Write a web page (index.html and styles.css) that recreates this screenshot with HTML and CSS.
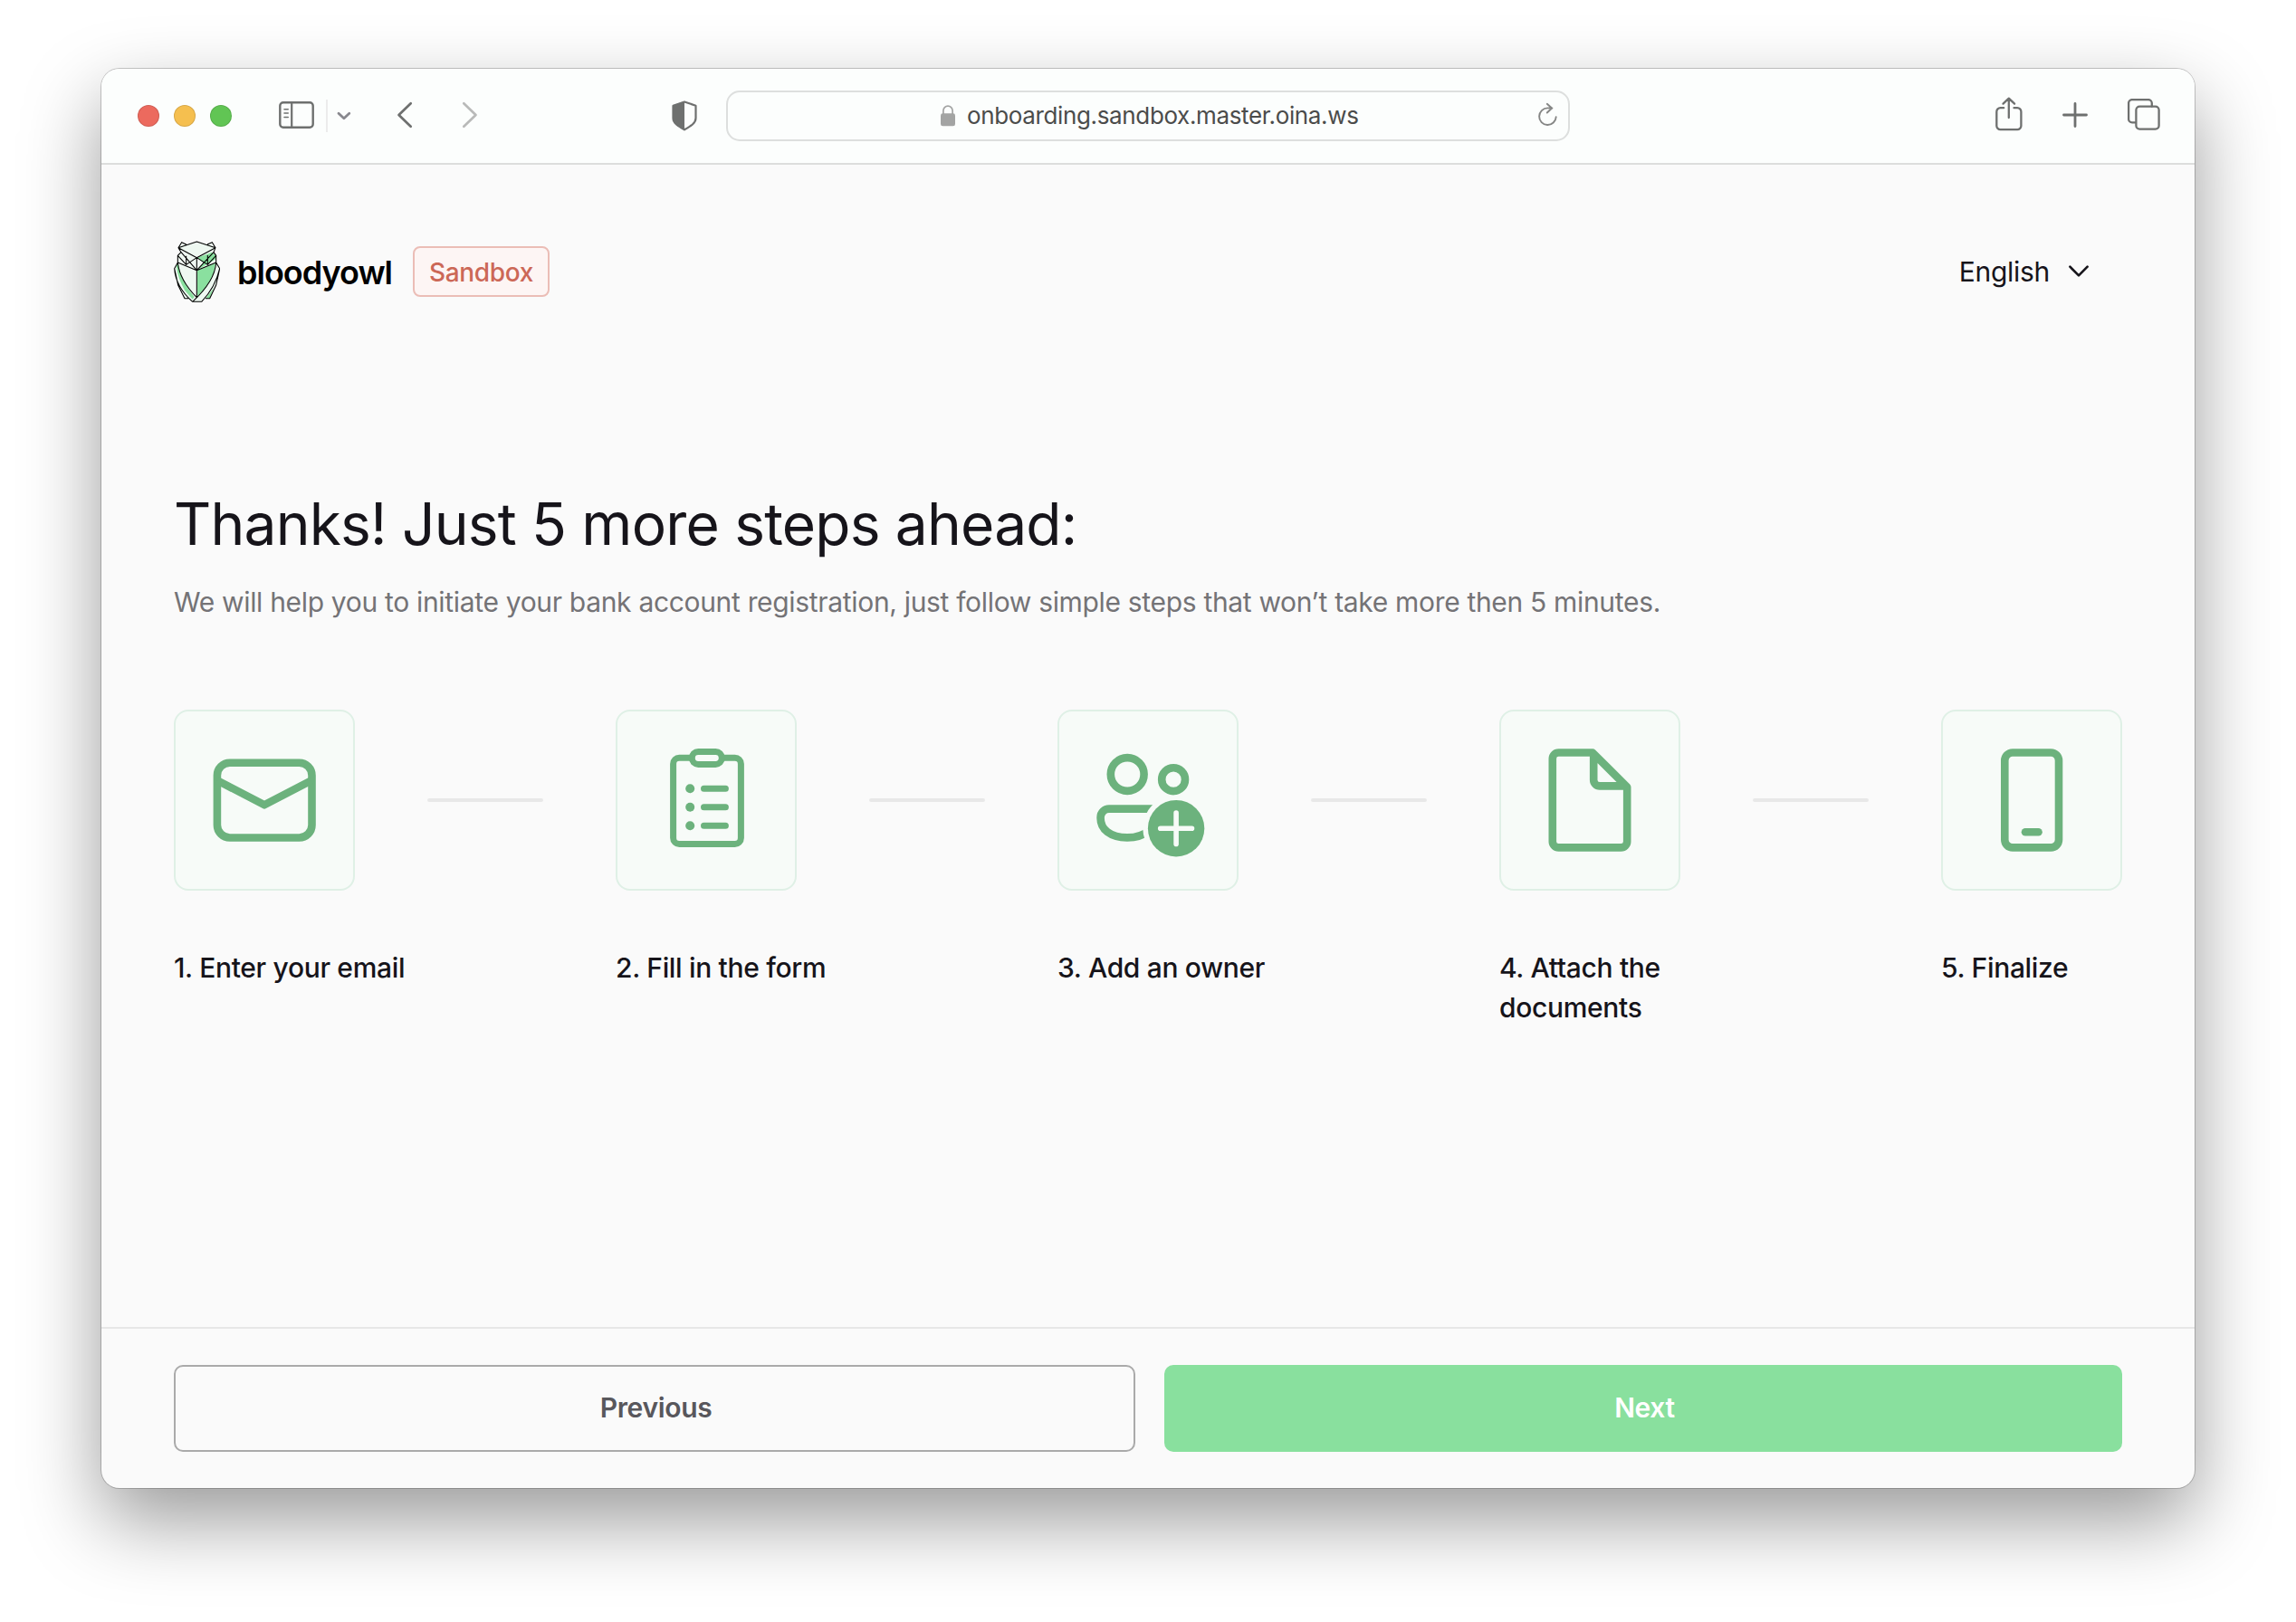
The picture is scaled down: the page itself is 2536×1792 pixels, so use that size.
FILE: index.html
```html
<!DOCTYPE html>
<html lang="en">
<head>
<meta charset="utf-8">
<title>Onboarding</title>
<link rel="stylesheet" href="styles.css">
</head>
<body>
<div class="window">
  <header class="toolbar">
    <div class="lights"><span class="light red"></span><span class="light yellow"></span><span class="light green"></span></div>
    <svg class="icon sidebar" width="40" height="32" viewBox="0 0 40 32"><rect x="1.3" y="2.3" width="36.4" height="27.4" rx="3.5" stroke-width="2.4"/><path d="M14.2 2v28" stroke-width="2.2"/><path d="M6 9.7h4.2M6 14h4.2M6 18.500h4.2" stroke-width="1.6"/></svg>
    <span class="divider"></span>
    <svg class="icon caret" width="16" height="10" viewBox="0 0 16 10"><path d="M2 2.200l5.900 5.600 5.900-5.600" stroke-width="2.800"/></svg>
    <svg class="icon back" width="18" height="30" viewBox="0 0 18 30"><path d="M15.700 2.300L2.500 15l13.200 12.700" stroke-width="2.700"/></svg>
    <svg class="icon forward" width="18" height="30" viewBox="0 0 18 30"><path d="M2.300 2.300L15.500 15 2.300 27.700" stroke-width="2.700"/></svg>
    <svg class="icon shield" width="28" height="34" viewBox="0 0 28 34"><path d="M14 1.500L26.500 5.700v13.800c0 5.500-5.500 8.800-12.500 12.800C7 28.300 1.500 25 1.500 19.500V5.700z" stroke-width="2.200"/><path class="solid" d="M14 1L1 5.500v14.200C1 25.500 7 28.800 14 32.800z"/></svg>
    <div class="address">
      <svg class="lock" width="16" height="24" viewBox="0 0 16 24"><path d="M2.900 11V6.200a5.100 5.100 0 0 1 10.200 0V11" fill="none" stroke="#a3a4a3" stroke-width="1.700"/><rect x="0" y="9.300" width="16" height="14" rx="2.300" fill="#a3a4a3"/></svg>
      <span class="url">onboarding.sandbox.master.oina.ws</span>
      <svg class="icon reload" width="24" height="28" viewBox="0 0 24 28"><path d="M20.700 16.200a9.300 9.300 0 1 1-9.300-9.800l5 .1M10.800 1.800l5.300 4.700-5.300 5" stroke-width="1.900"/></svg>
    </div>
    <svg class="icon share" width="30" height="38" viewBox="0 0 30 38"><path d="M9.200 12.200H5.500a4.200 4.200 0 0 0-4.200 4.200v15.500a4.200 4.200 0 0 0 4.200 4.200h18.700a4.200 4.200 0 0 0 4.200-4.200V16.400a4.200 4.200 0 0 0-4.200-4.200H20.500M14.800 23V2M8.500 7.600l6.300-6 6.300 6" stroke-width="2.300"/></svg>
    <svg class="icon plus" width="28" height="28" viewBox="0 0 28 28"><path d="M14 1.500v25M1.500 14h25" stroke-width="2.800"/></svg>
    <svg class="icon tabs" width="36" height="36" viewBox="0 0 36 36"><path d="M8.500 26.400H5a3.900 3.900 0 0 1-3.900-3.900V5A3.900 3.900 0 0 1 5 1.100h17.900A3.900 3.900 0 0 1 26.800 5v3.500" stroke-width="2.300"/><rect x="9.400" y="8.700" width="25.200" height="25" rx="3.900" stroke-width="2.300"/></svg>
  </header>

  <main class="page">
    <div class="topbar">
      <svg class="owl" width="51" height="68" viewBox="36 48 153 204">
        <path class="pale" d="M51 71L62 53 78 61 112 51 147 60 163 53 174 71 168 86 176 97v23l12 22-12 53-21 44h-14l-13 12H98l-14-12H72L50 195 38 140l11-20V97l10-11z"/>
        <path class="mint" d="M44 130l6-8q8 55 54 112l-6 8-26-30Q50 175 44 130zM114 146l60-24q-6 60-60 110zM114 104l48-18 13 11v12l-61 36 20-24zM168 205l-14 34h-13z"/>
        <path class="line" d="M51 71L112 51l62 20-62 33zM51 71l11-18 16 8M174 71l-11-18-16 7M51 71l9 15-11 11v23l63 26 64-26V97l-8-11 6-15M60 86l52 60 56-60M112 104L77 127 49 97M112 104l36 23 28-30M77 98v29M148 96v31M112 104v132M49 120q6 58 63 116M176 120q-4 62-78 130M49 120L38 140q4 60 60 110h30q46-48 60-110l-12-20M38 140l12 55 22 44h12M188 140l-12 55-21 44h-14"/>
      </svg>
      <span class="brand">bloodyowl</span>
      <span class="badge">Sandbox</span>
      <div class="language">English
        <svg width="24" height="16" viewBox="0 0 24 16"><path d="M2.400 2.700L12 12.300l9.600-9.600" fill="none" stroke="#16141a" stroke-width="2.600" stroke-linecap="round" stroke-linejoin="round"/></svg>
      </div>
    </div>

    <h1 class="title">Thanks! Just 5 more steps ahead:</h1>
    <p class="lead">We will help you to initiate your bank account registration, just follow simple steps that won’t take more then 5 minutes.</p>

    <ol class="steps">
      <li class="step">
        <div class="tile"><svg viewBox="2 2 196 196"><rect x="47.900" y="58.700" width="104.600" height="82.800" rx="14"/><path d="M48 78.200l52 27.100 52-27.100"/></svg></div>
        <span class="rule"></span>
        <p class="label">1. Enter your email</p>
      </li>
      <li class="step">
        <div class="tile"><svg viewBox="2 2 196 196"><g class="thin"><path d="M84.300 53.200H70.300a6.700 6.700 0 0 0-6.700 6.700v81.900a6.700 6.700 0 0 0 6.700 6.700h61.400a6.700 6.700 0 0 0 6.700-6.700V59.900a6.700 6.700 0 0 0-6.700-6.700h-14"/><rect x="84.300" y="46.500" width="33" height="13.900" rx="6.900"/><path class="round" d="M97.500 87.300h23.900M97.500 107.700h23.900M97.500 128.300h23.900"/></g><g class="solid"><circle cx="82.200" cy="87.300" r="5"/><circle cx="82.200" cy="107.700" r="5"/><circle cx="82.200" cy="128.300" r="5"/></g></svg></div>
        <span class="rule"></span>
        <p class="label">2. Fill in the form</p>
      </li>
      <li class="step">
        <div class="tile"><svg viewBox="2 2 196 196"><circle cx="77.200" cy="71.500" r="18.400"/><circle cx="128.100" cy="77.200" r="12.900"/><path d="M110 109.600H57a9.400 9.400 0 0 0-9.400 9.400v1c0 12 10.400 21.400 29.400 21.400 11 0 18-2.400 25-8.400"/><circle class="halo" cx="131.100" cy="131.200" r="36.800"/><circle class="solid" cx="131.100" cy="131.200" r="31.200"/><path class="cross" d="M131.100 114v34.400M113.700 131.200h34.800"/></svg></div>
        <span class="rule"></span>
        <p class="label">3. Add an owner</p>
      </li>
      <li class="step">
        <div class="tile"><svg viewBox="2 2 196 196"><path d="M103 47.500H65.500a6.700 6.700 0 0 0-6.700 6.700v91.500a6.700 6.700 0 0 0 6.700 6.700h69a6.700 6.700 0 0 0 6.700-6.700V85.500zM104.200 48v29.700a6.700 6.700 0 0 0 6.700 6.700H140"/></svg></div>
        <span class="rule"></span>
        <p class="label">4. Attach the documents</p>
      </li>
      <li class="step">
        <div class="tile"><svg viewBox="2 2 196 196"><rect x="70.300" y="47.500" width="59.700" height="104.900" rx="8.700"/><path class="round" d="M93 135.300h14.500"/></svg></div>
        <p class="label">5. Finalize</p>
      </li>
    </ol>
  </main>

  <footer class="actions">
    <button class="button previous">Previous</button>
    <button class="button next">Next</button>
  </footer>
</div>
</body>
</html>
```
FILE: styles.css
```css
* { box-sizing: border-box; }

body {
  margin: 0;
  height: 1792px;
  overflow: hidden;
  background: #fff;
  color: #16141a;
  font-family: Inter, "Liberation Sans", sans-serif;
}

.window {
  display: flex;
  flex-direction: column;
  width: 2312px;
  height: 1568px;
  margin: 76px 112px;
  border-radius: 20px;
  background: #fafafa;
  box-shadow: 0 0 0 1px rgba(0, 0, 0, .2), 0 36px 86px rgba(0, 0, 0, .4);
}

/* Browser toolbar */
.toolbar {
  display: flex;
  align-items: center;
  height: 106px;
  padding: 0 38px 0 40px;
  border-bottom: 2px solid #dcdddc;
  border-radius: 20px 20px 0 0;
  background: #fcfefd;
}

.lights { display: flex; gap: 16px; }
.light { width: 24px; height: 24px; border-radius: 50%; border: 1px solid rgba(0, 0, 0, .12); }
.red { background: #ec6a5e; }
.yellow { background: #f5bf4f; }
.green { background: #61c554; }

.icon { flex: none; fill: none; stroke: #6e706f; stroke-linecap: round; stroke-linejoin: round; }
.icon .solid { fill: #6e706f; stroke: none; }
.sidebar { margin: -2px 0 0 52px; }
.divider { width: 2px; height: 36px; margin-left: 12px; background: #ececec; }
.caret { margin-left: 10px; stroke: #88888e; }
.back { margin: -2px 0 0 50px; }
.forward { margin: -2px 0 0 54px; stroke: #b9bab9; }
.shield { margin: -1px 0 0 214px; }

.address {
  display: flex;
  align-items: center;
  flex: none;
  width: 932px;
  height: 56px;
  margin-left: 32px;
  padding: 0 10px 0 235px;
  border: 2px solid #dddfde;
  border-radius: 15px;
}
.url { margin-left: 13px; color: #4b4c4b; font-size: 26px; letter-spacing: -.36px; line-height: 32px; white-space: nowrap; }
.reload { margin: -2px 0 0 auto; stroke: #858685; }
.share { margin: -5px 0 0 470px; }
.plus { margin: -3px 0 0 44px; }
.tabs { margin: -2px 0 0 44px; }

/* Page */
.page { flex: 1; padding: 84px 80px 0; }

.topbar { display: flex; align-items: center; height: 68px; }
.owl .pale { fill: #eef8f1; }
.owl .mint { fill: #8ae09f; }
.owl .line { fill: none; stroke: #000; stroke-width: 3.2; stroke-linejoin: round; }
.brand { margin: 2px 0 0 19px; color: #000; font-size: 36px; font-weight: 600; letter-spacing: -1px; line-height: 44px; }
.badge {
  width: 151px;
  height: 56px;
  margin-left: 23px;
  padding: 0 0 0 16px;
  border: 2px solid #ebbdb6;
  border-radius: 8px;
  background: #fdf5f4;
  color: #cc6857;
  font-size: 28px;
  font-weight: 500;
  letter-spacing: -.35px;
  line-height: 54px;
}
.language { display: flex; align-items: center; gap: 20px; margin-left: auto; padding-right: 36px; font-size: 30px; letter-spacing: -.3px; line-height: 44px; }

.title { margin: 201px 0 0; font-size: 64px; font-weight: 400; letter-spacing: -.79px; line-height: 88px; }
.lead { margin: 20px 0 0; color: #747376; font-size: 30px; letter-spacing: -.322px; line-height: 44px; white-space: nowrap; }

.steps { display: flex; margin: 97px 0 0; padding: 0; list-style: none; }
.step { display: grid; grid-template-columns: 200px 128px; column-gap: 80px; align-items: center; width: 488px; flex: none; align-content: start; }
.step:last-child { grid-template-columns: 200px; width: 200px; }
.tile { width: 200px; height: 200px; border: 2px solid #dff0e6; border-radius: 16px; background: #f7fbf8; }
.tile svg { display: block; width: 196px; height: 196px; fill: none; stroke: #6cb27d; stroke-width: 8.6; stroke-linejoin: round; }
.tile .thin { stroke-width: 7; }
.tile .round { stroke-linecap: round; }
.tile .solid { fill: #6cb27d; stroke: none; }
.tile .halo { fill: #f7fbf8; stroke: none; }
.tile .cross { stroke: #f7fbf8; stroke-width: 5.6; stroke-linecap: round; }
.rule { height: 4px; border-radius: 2px; background: #e8e8e8; }
.label { grid-column: 1; width: 264px; margin: 63px 0 0; font-size: 30px; font-weight: 500; letter-spacing: -.33px; line-height: 44px; }

/* Footer */
.actions { display: flex; gap: 32px; height: 178px; padding: 40px 80px; border-top: 2px solid #e7e7e7; }
.button { height: 96px; padding: 0 0 2px 3px; border-radius: 10px; font: 600 30px/44px Inter, "Liberation Sans", sans-serif; letter-spacing: -.33px; }
.previous { width: 1062px; border: 2px solid #aaa; background: transparent; color: #58575c; }
.next { width: 1058px; border: 0; background: #89e09e; color: #fff; }
```
